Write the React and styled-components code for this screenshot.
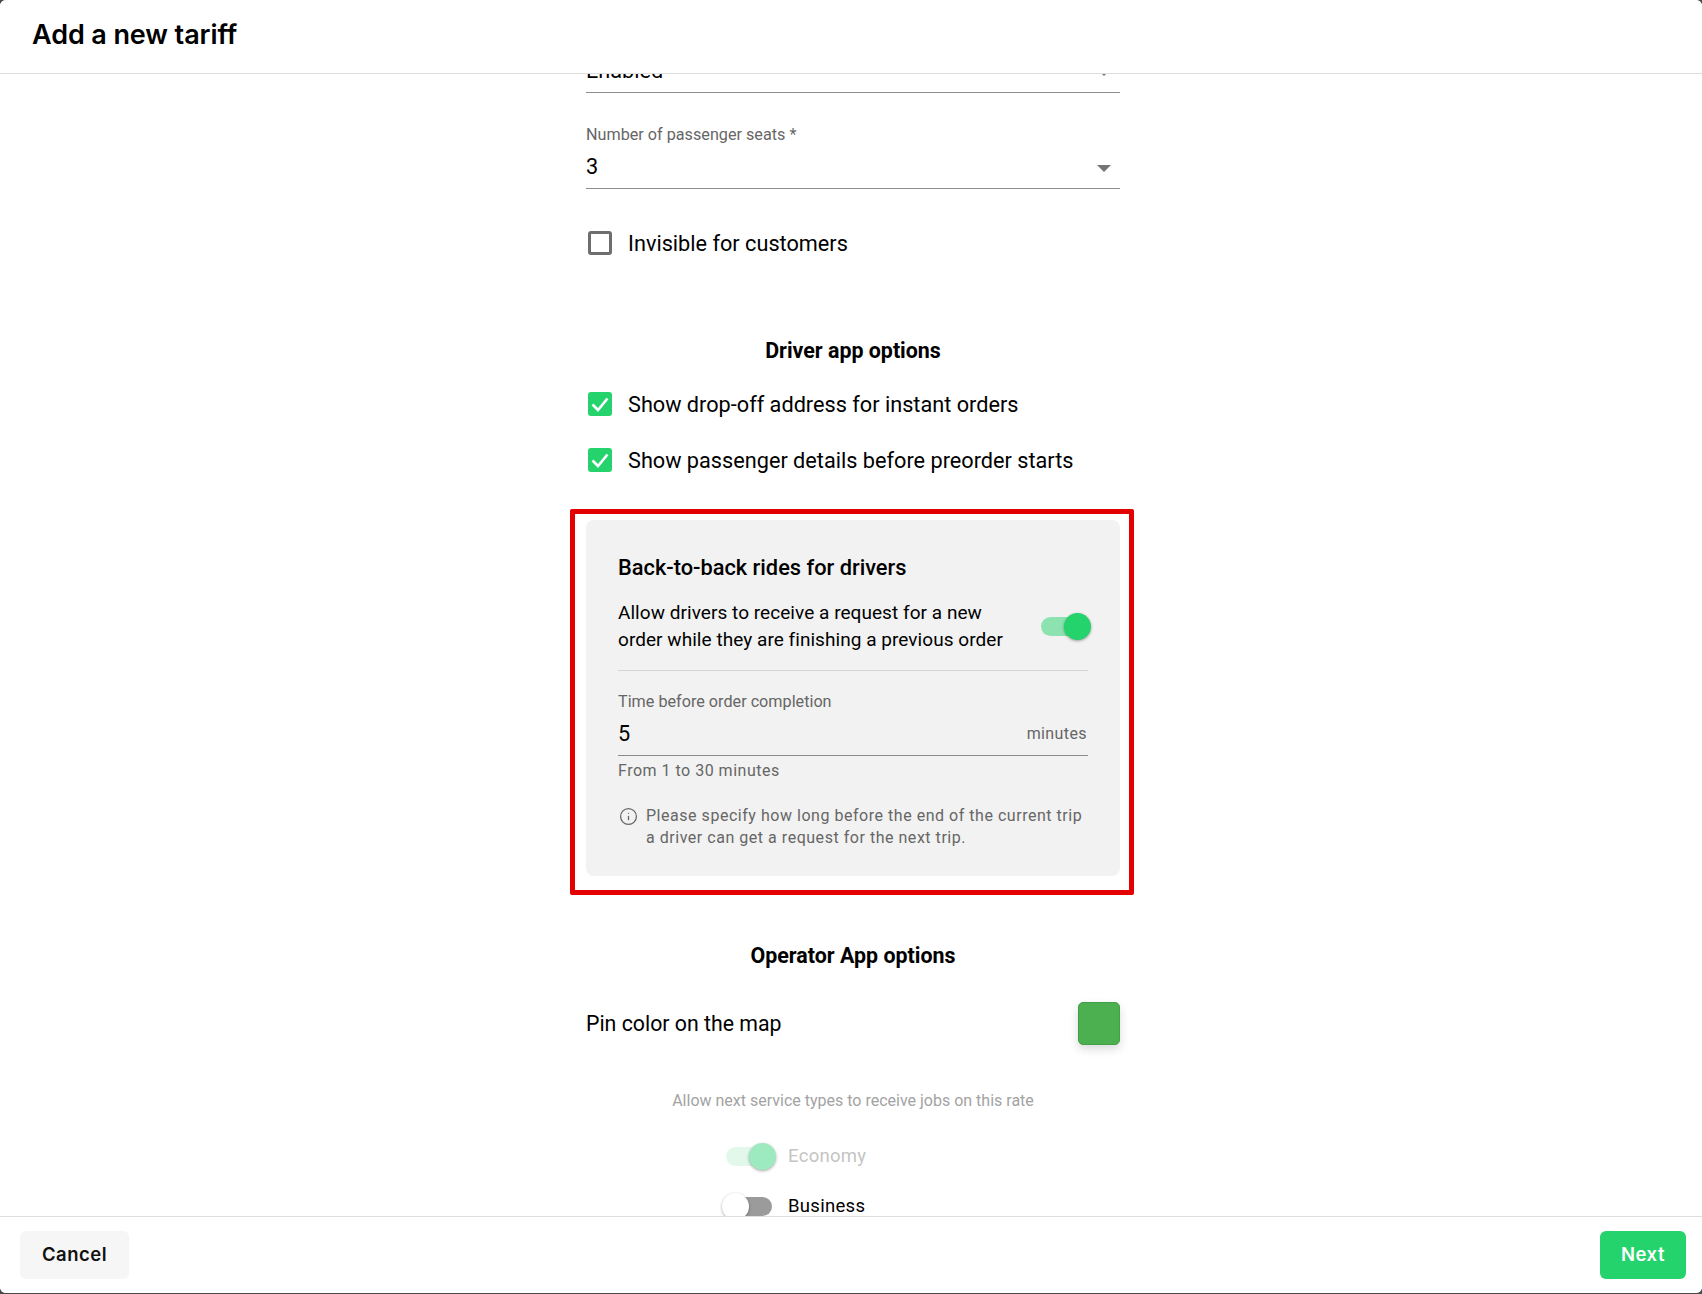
import React from 'react'
import styled, { createGlobalStyle } from 'styled-components'
import { Info } from 'lucide-react'

const GlobalStyle = createGlobalStyle`
    html, body {
        margin: 0;
        padding: 0;
        background: #4a4a4a;
    }
    * {
        box-sizing: border-box;
    }
`

const Page = styled.div`
    width: 1702px;
    height: 1293px;
    background: #fff;
    border-radius: 6px;
    display: flex;
    flex-direction: column;
    overflow: hidden;
    font-family: Roboto, sans-serif;
    color: #000;
`

const Header = styled.header`
    height: 74px;
    flex: none;
    display: flex;
    align-items: center;
    padding: 0 0 4px 32px;
    border-bottom: 1px solid #dedede;
    background: #fff;
    position: relative;
    z-index: 1;
`

const Title = styled.h1`
    margin: 0;
    font-family: Inter, sans-serif;
    font-size: 27px;
    font-weight: 600;
    letter-spacing: -0.1px;
`

const Main = styled.main`
    flex: 1;
    min-height: 0;
    overflow: hidden;
`

const Column = styled.div`
    width: 534px;
    margin: -25px auto 0 586px;
    display: flex;
    flex-direction: column;
`

const Field = styled.div`
    margin-top: ${p => p.$top || 0}px;
`

const FieldLabel = styled.div`
    font-size: 16.2px;
    line-height: 20px;
    color: #666;
`

const ValueRow = styled.div`
    height: 44px;
    display: flex;
    align-items: center;
    justify-content: space-between;
    border-bottom: 1px solid #8c8c8c;
    font-size: 21.7px;
`

const Arrow = styled.span`
    width: 0;
    height: 0;
    margin: 3px 9px 0 0;
    border-left: 7.5px solid transparent;
    border-right: 7.5px solid transparent;
    border-top: 7.5px solid #757575;
`

const Suffix = styled.span`
    font-size: 16px;
    letter-spacing: 0.4px;
    color: #666;
    margin-right: 1px;
`

const CheckRow = styled.label`
    display: flex;
    align-items: center;
    gap: 16px;
    height: 24px;
    margin-top: ${p => p.$top}px;
    padding-left: 2px;
    font-size: 21.7px;
`

const CheckBox = styled.span`
    width: 24px;
    height: 24px;
    flex: none;
    border-radius: 3px;
    display: flex;
    align-items: center;
    justify-content: center;
    background: ${p => (p.$checked ? '#24d36c' : '#fff')};
    border: ${p => (p.$checked ? 'none' : '3px solid #6e6e6e')};
`

const SectionTitle = styled.h2`
    margin: ${p => p.$top}px 0 0;
    font-size: 21.4px;
    line-height: 24px;
    font-weight: 700;
    text-align: center;
`

const Card = styled.section`
    margin-top: 48px;
    height: 356px;
    padding: 36px 32px 0;
    background: #f2f2f2;
    border-radius: 8px;
    position: relative;

    &::after {
        content: '';
        position: absolute;
        inset: -11px -14px -19px -16px;
        border: 5px solid #e30000;
        border-radius: 2px;
        pointer-events: none;
    }
`

const CardTitle = styled.h3`
    margin: 0;
    font-size: 21.8px;
    line-height: 24px;
    font-weight: 500;
`

const ToggleRow = styled.div`
    margin-top: 19px;
    padding-bottom: 17px;
    display: flex;
    align-items: center;
    justify-content: space-between;
    border-bottom: 1px solid #d4d4d4;
`

const ToggleText = styled.p`
    margin: 0;
    font-size: 19px;
    line-height: 27px;
    letter-spacing: 0.05px;
`

const Track = styled.span`
    position: relative;
    display: block;
    flex: none;
    width: 46px;
    height: 19px;
    border-radius: 10px;
    margin-right: ${p => p.$inset || 0}px;
    background: ${p => (p.$on ? (p.$faded ? '#e2f8eb' : '#8ce3b0') : '#9b9b9b')};
`

const Knob = styled.span`
    position: absolute;
    top: -4px;
    left: ${p => (p.$on ? '23px' : '-4px')};
    width: 27px;
    height: 27px;
    border-radius: 50%;
    background: ${p => (p.$on ? (p.$faded ? '#9eeac0' : '#24d36c') : '#fff')};
    box-shadow: 0 1px 3px rgba(0, 0, 0, 0.35);
`

const Helper = styled.div`
    margin-top: 5px;
    font-size: 16px;
    line-height: 20px;
    letter-spacing: 0.5px;
    color: #666;
`

const Note = styled.div`
    margin-top: 24px;
    display: flex;
    gap: 8px;
    font-size: 16px;
    line-height: 22px;
    letter-spacing: 0.53px;
    color: #666;

    svg {
        flex: none;
        margin: 2px 0 0 1px;
    }
`

const PinRow = styled.div`
    margin-top: 34px;
    display: flex;
    align-items: center;
    justify-content: space-between;
    font-size: 21.3px;
`

const Swatch = styled.span`
    width: 42px;
    height: 43px;
    background: #4caf50;
    border: 1px solid #43a047;
    border-radius: 5px;
    box-shadow: 0 4px 10px rgba(0, 0, 0, 0.15);
`

const ServiceCaption = styled.div`
    margin-top: 46px;
    text-align: center;
    font-size: 16px;
    line-height: 20px;
    color: #a3a3a3;
`

const ServiceList = styled.div`
    margin-top: 31px;
    padding-left: 140px;
    display: flex;
    flex-direction: column;
    gap: 22px;
`

const ServiceRow = styled.div`
    height: 28px;
    display: flex;
    align-items: center;
    gap: 16px;
    font-size: 18.5px;
    letter-spacing: 0.3px;
    color: ${p => (p.$disabled ? '#c4c4c4' : '#000')};
`

const Footer = styled.footer`
    height: 77px;
    flex: none;
    display: flex;
    align-items: flex-start;
    justify-content: space-between;
    padding: 14px 16px 0 20px;
    border-top: 1px solid #dedede;
    background: #fff;
    position: relative;
`

const Button = styled.button`
    height: 48px;
    width: ${p => p.$width}px;
    padding: 0 0 2px;
    border: none;
    border-radius: 6px;
    font-family: Inter, sans-serif;
    font-size: 18.5px;
    font-weight: 600;
    letter-spacing: 0.5px;
    background: ${p => (p.$primary ? '#24d36c' : '#f6f6f6')};
    color: ${p => (p.$primary ? '#fff' : '#111')};
`

const Tick = () => (
    <svg width="20" height="20" viewBox="0 0 20 20" fill="none">
        <path d="M2.5 10.5 L8 16 L17.5 4.5" stroke="#fff" strokeWidth="2.6" />
    </svg>
)

const Check = ({ top, checked, children }) => (
    <CheckRow $top={top}>
        <CheckBox $checked={checked}>{checked && <Tick />}</CheckBox>
        {children}
    </CheckRow>
)

const Toggle = ({ on, faded, inset }) => (
    <Track $on={on} $faded={faded} $inset={inset}>
        <Knob $on={on} $faded={faded} />
    </Track>
)

const App = () => (
    <Page>
        <GlobalStyle />
        <Header>
            <Title>Add a new tariff</Title>
        </Header>
        <Main>
            <Column>
                <Field>
                    <ValueRow>
                        Enabled
                        <Arrow />
                    </ValueRow>
                </Field>
                <Field $top={32}>
                    <FieldLabel>Number of passenger seats *</FieldLabel>
                    <ValueRow>
                        3
                        <Arrow />
                    </ValueRow>
                </Field>
                <Check top={42}>Invisible for customers</Check>

                <SectionTitle $top={84}>Driver app options</SectionTitle>
                <Check top={29} checked>Show drop-off address for instant orders</Check>
                <Check top={32} checked>Show passenger details before preorder starts</Check>

                <Card>
                    <CardTitle>Back-to-back rides for drivers</CardTitle>
                    <ToggleRow>
                        <ToggleText>
                            Allow drivers to receive a request for a new
                            <br />
                            order while they are finishing a previous order
                        </ToggleText>
                        <Toggle on inset={1} />
                    </ToggleRow>
                    <Field $top={21}>
                        <FieldLabel>Time before order completion</FieldLabel>
                        <ValueRow>
                            5
                            <Suffix>minutes</Suffix>
                        </ValueRow>
                    </Field>
                    <Helper>From 1 to 30 minutes</Helper>
                    <Note>
                        <Info size={19} strokeWidth={1.6} />
                        <span>
                            Please specify how long before the end of the current trip
                            <br />
                            a driver can get a request for the next trip.
                        </span>
                    </Note>
                </Card>

                <SectionTitle $top={68}>Operator App options</SectionTitle>
                <PinRow>
                    Pin color on the map
                    <Swatch />
                </PinRow>
                <ServiceCaption>Allow next service types to receive jobs on this rate</ServiceCaption>
                <ServiceList>
                    <ServiceRow $disabled>
                        <Toggle on faded />
                        Economy
                    </ServiceRow>
                    <ServiceRow>
                        <Toggle />
                        Business
                    </ServiceRow>
                </ServiceList>
            </Column>
        </Main>
        <Footer>
            <Button $width={109}>Cancel</Button>
            <Button $primary $width={86}>Next</Button>
        </Footer>
    </Page>
)

export default App
